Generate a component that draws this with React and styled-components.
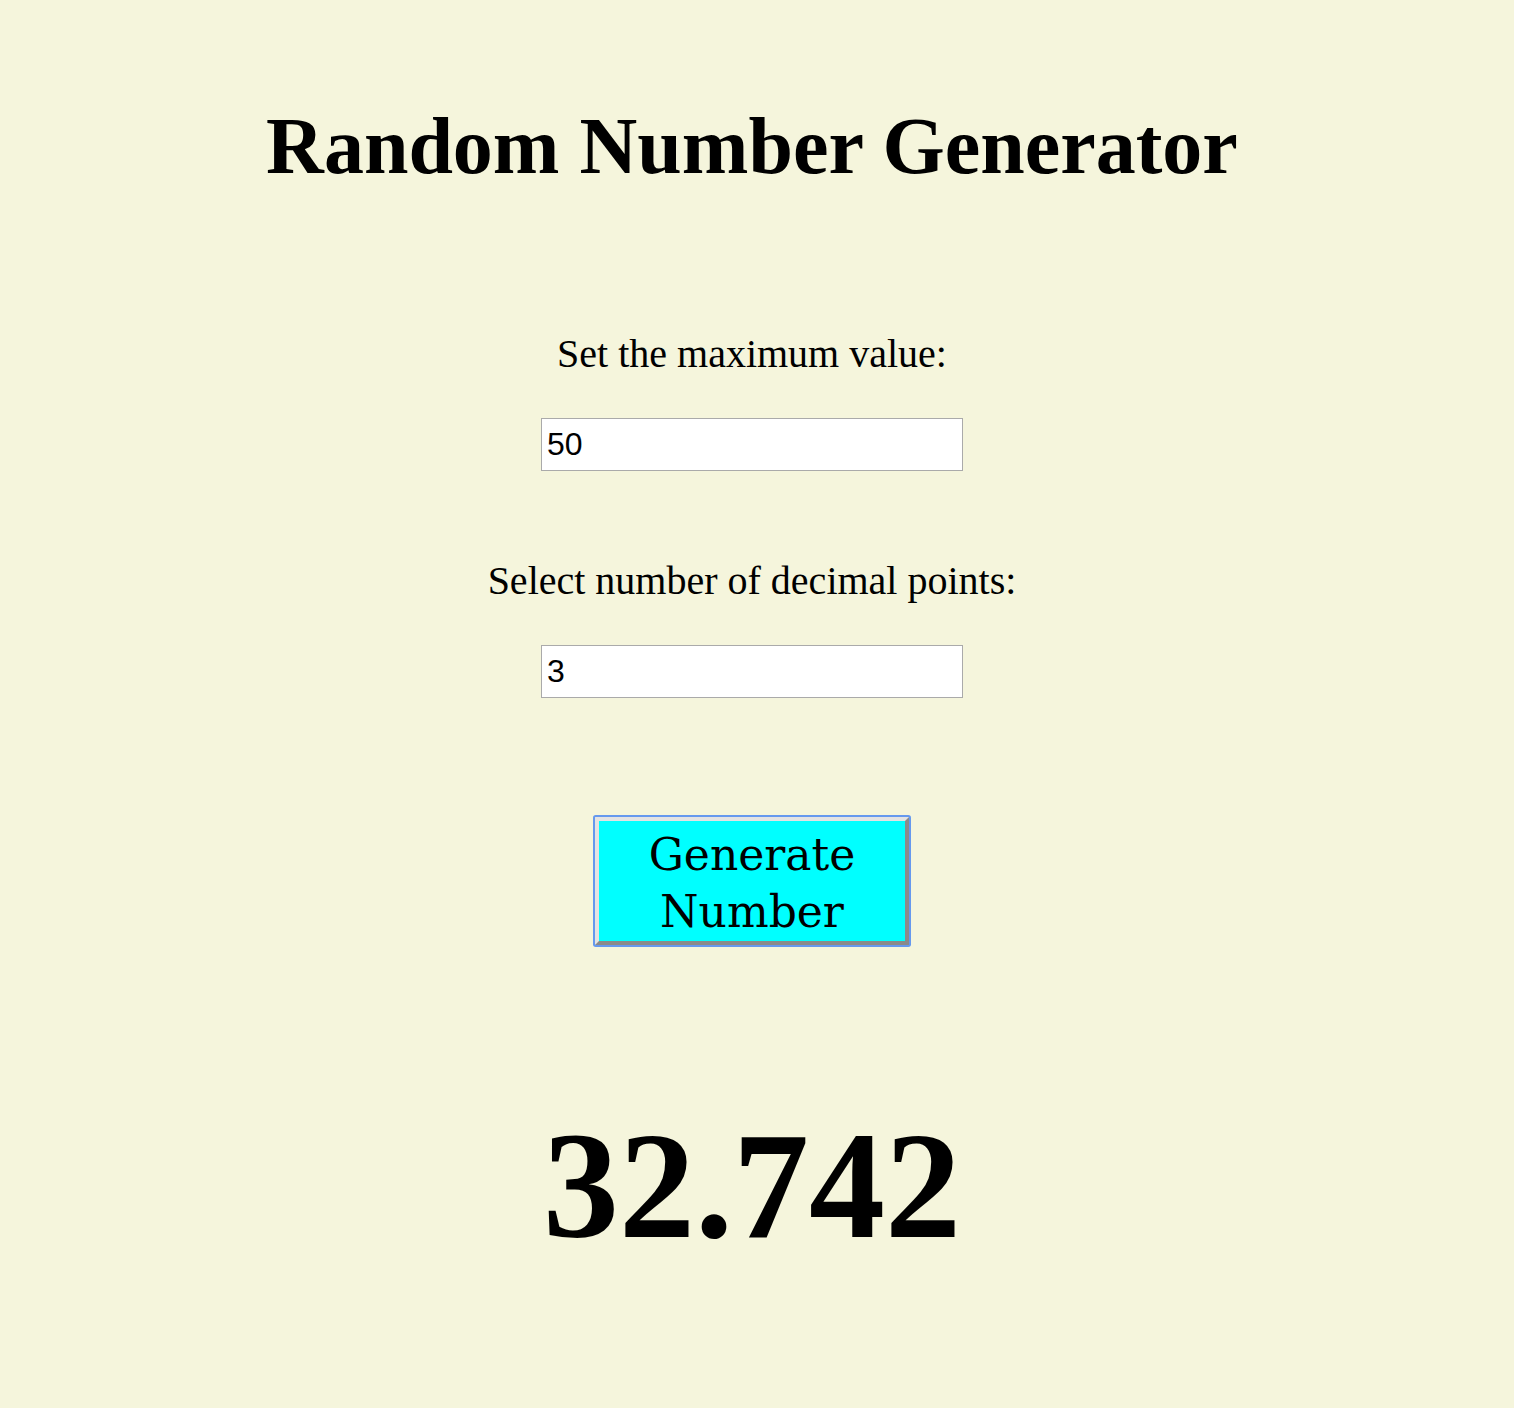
import React, { useState } from "react"
import styled, { createGlobalStyle } from "styled-components"

const GlobalStyle = createGlobalStyle`
  body {
    margin: 0;
    background: #f5f5dc;
    font-family: "Liberation Serif", "Times New Roman", serif;
    color: #000;
  }
`

const Page = styled.main`
  display: flex;
  flex-direction: column;
  align-items: center;
  padding-right: 10px;
  padding-bottom: 80px;
`

const Title = styled.h1`
  margin: 100px 0 0;
  font-size: 80px;
  line-height: 92px;
  font-weight: bold;
`

const Field = styled.div`
  display: flex;
  flex-direction: column;
  align-items: center;
  margin-top: ${props => props.$top}px;
`

const Label = styled.label`
  font-size: 40px;
  line-height: 46px;
`

const NumberInput = styled.input`
  box-sizing: border-box;
  width: 422px;
  height: 53px;
  margin-top: 41px;
  padding: 0 5px;
  border: 1px solid #aaa;
  background: #fff;
  font-family: "Liberation Sans", Arial, sans-serif;
  font-size: 32px;
  color: #000;
  outline: none;
`

const GenerateButton = styled.button`
  box-sizing: border-box;
  width: 314px;
  margin-top: 119px;
  padding: 5px 6px 1px;
  background: #00ffff;
  border: 4px solid;
  border-color: #e3e3e3 #8a8a8a #8a8a8a #e3e3e3;
  border-radius: 1px;
  box-shadow: 0 0 0 2px #6699ee;
  font-family: "DejaVu Serif", Georgia, serif;
  font-size: 44px;
  line-height: 57px;
  color: #000;
  cursor: pointer;
`

const Result = styled.div`
  margin-top: 159px;
  font-size: 152px;
  line-height: 164px;
  font-weight: bold;
`

function App() {
  const [max, setMax] = useState("50")
  const [decimals, setDecimals] = useState("3")
  const [result, setResult] = useState("32.742")

  function generate() {
    const m = parseFloat(max) || 0
    const d = Math.max(0, Math.min(10, parseInt(decimals, 10) || 0))
    setResult((Math.random() * m).toFixed(d))
  }

  return (
    <>
      <GlobalStyle />
      <Page>
        <Title>Random Number Generator</Title>

        <Field $top={139}>
          <Label htmlFor="max">Set the maximum value:</Label>
          <NumberInput
            id="max"
            type="text"
            value={max}
            onChange={e => setMax(e.target.value)}
          />
        </Field>

        <Field $top={87}>
          <Label htmlFor="decimals">Select number of decimal points:</Label>
          <NumberInput
            id="decimals"
            type="text"
            value={decimals}
            onChange={e => setDecimals(e.target.value)}
          />
        </Field>

        <GenerateButton onClick={generate}>Generate Number</GenerateButton>

        <Result>{result}</Result>
      </Page>
    </>
  )
}

export default App
